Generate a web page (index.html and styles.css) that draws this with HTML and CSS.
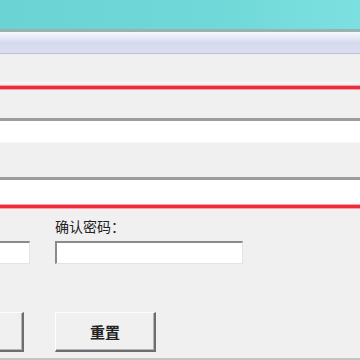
FILE: index.html
```html
<!DOCTYPE html>
<html lang="zh">

<head>
    <meta charset="utf-8">
    <meta name="viewport" content="width=device-width, initial-scale=1.0">
    <title>注册</title>
    <link rel="stylesheet" href="styles.css">
</head>

<body>
    <div id="titel"></div>
    <div id="menu"></div>

    <div id="form">
        <div class="linje"></div>
        <div class="rod"></div>
        <div class="felt felt1"></div>
        <div class="felt felt2"></div>
        <div class="rod"></div>

        <div class="raekke">
            <div class="gruppe">
                <label></label>
                <input type="password">
            </div>
            <div class="gruppe">
                <label>确认密码：</label>
                <input type="password">
            </div>
        </div>

        <div class="knapper">
            <button></button>
            <button>重置</button>
        </div>
        <div class="bund"></div>
    </div>
</body>

</html>
```

FILE: styles.css
```css
html,
body,
* {
    margin: 0;
    padding: 0;
    box-sizing: border-box;
}

body {
    width: 360px;
    height: 360px;
    overflow: hidden;
    background-color: #f0f0f0;
    font-family: "Noto Sans CJK SC", sans-serif;
}

#titel {
    height: 32px;
    background-image: linear-gradient(to right, #6bd3d3, #70d8d8 60%, #7de0e0);
    border-bottom: 3px solid #98b2b2;
}

#menu {
    height: 22px;
    background-image: linear-gradient(to bottom, #f8f8fc, #eceef8 20%, #d6daee 50%, #dcdff0);
    border-bottom: 1px solid #bcc0d4;
}

#form {
    padding-top: 28px;
}

.linje {
    height: 1px;
    background-color: #fbfbfb;
    margin-bottom: 3px;
}

.rod {
    height: 3px;
    background-color: #ee2b3a;
    box-shadow: 0 -1px 0 #f7a0a8, 0 1px 0 #f7a0a8;
}

.felt {
    background-color: white;
    border-top: 3px solid #9c9c9c;
    border-bottom: 1px solid #f8f8f8;
}

.felt1 {
    margin-top: 29px;
    height: 25px;
}

.felt2 {
    margin-top: 34px;
    height: 27px;
    margin-bottom: 1px;
}

.raekke {
    display: flex;
    gap: 25px;
    margin-left: -158px;
    margin-top: 9px;
}

.gruppe {
    display: flex;
    flex-direction: column;
    width: 188px;
}

label {
    font-size: 14px;
    line-height: 18px;
    color: #222;
    height: 24px;
}

input {
    height: 23px;
    background-color: white;
    border: 1px solid #e4e4e4;
    border-top: 2px solid #8a8a8a;
    border-left: 2px solid #8a8a8a;
    outline: none;
}

.knapper {
    display: flex;
    gap: 31px;
    margin-left: -77px;
    margin-top: 48px;
}

button {
    width: 101px;
    height: 40px;
    background-color: #f0f0f0;
    border: 1px solid #fdfdfd;
    border-right: 2px solid #6e6e6e;
    border-bottom: 2px solid #6e6e6e;
    box-shadow: inset -1px -1px 0 #b4b4b4;
    font-family: "Noto Sans CJK SC", sans-serif;
    font-size: 15px;
    font-weight: bold;
    color: #222;
}

.bund {
    margin-top: 6px;
    height: 2px;
    background-color: #c4c4c4;
}
```
